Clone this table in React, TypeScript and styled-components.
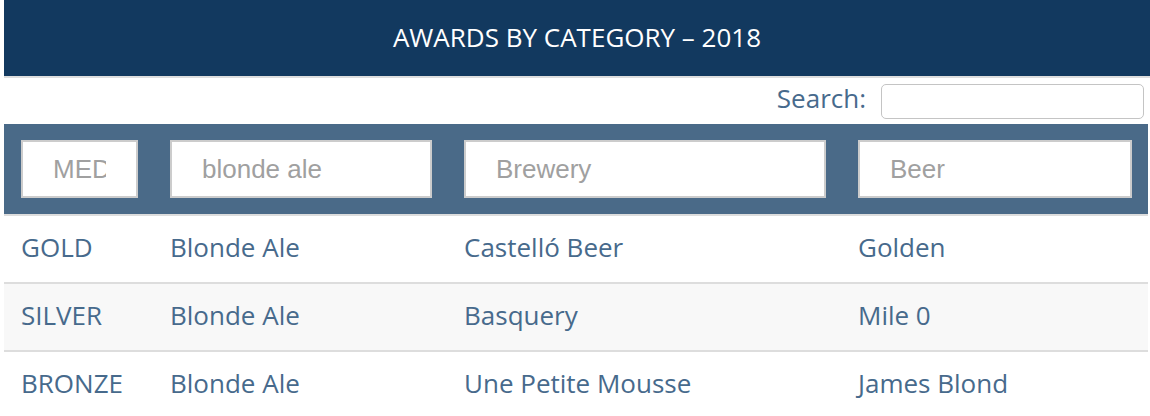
import styled, { createGlobalStyle } from 'styled-components';

const GlobalStyle = createGlobalStyle`
  body {
    margin: 0;
    background: #fff;
    font-family: 'Open Sans', sans-serif;
  }
  * {
    box-sizing: border-box;
  }
`;

const Page = styled.div`
  padding-left: 4px;
  width: 1150px;
`;

const Header = styled.h1`
  margin: 0;
  height: 78px;
  background: #12395f;
  border-bottom: 2px solid #dedede;
  color: #fff;
  font-size: 26px;
  font-weight: 400;
  display: flex;
  align-items: center;
  justify-content: center;
  padding-bottom: 2px;
`;

const SearchBar = styled.div`
  height: 46px;
  display: flex;
  align-items: center;
  justify-content: flex-end;
  gap: 15px;
  padding-right: 2px;
  color: #476a8c;
  font-size: 26px;
  margin-right: 4px;
`;

const SearchLabel = styled.label`
  margin-bottom: 6px;
`;

const SearchInput = styled.input`
  width: 263px;
  height: 35px;
  border: 1px solid #c4c4c4;
  border-radius: 5px;
  margin-top: 1px;
`;

const Table = styled.div`
  width: 1144px;
`;

const cols = '150px 294px 394px 306px';

const FilterRow = styled.div`
  display: grid;
  grid-template-columns: ${cols};
  background: #4a6a88;
  height: 92px;
  border-bottom: 2px solid #dddddd;
  align-items: center;
`;

const FilterCell = styled.div<{ first?: boolean }>`
  padding: 0 16px 0 ${(p) => (p.first ? '17px' : '16px')};
`;

const FilterInput = styled.input`
  width: 100%;
  height: 58px;
  border: 2px solid #cccccc;
  background: #fff;
  padding: 0 30px;
  font-family: 'Liberation Sans', Arial, sans-serif;
  font-size: 26px;
  color: #555;
  outline: none;

  &::placeholder {
    color: #a0a0a0;
  }
`;

const Row = styled.div<{ striped?: boolean }>`
  display: grid;
  grid-template-columns: ${cols};
  height: 68px;
  border-bottom: 2px solid #dddddd;
  background: ${(p) => (p.striped ? '#f8f8f8' : '#fff')};
  align-items: center;
`;

const Cell = styled.div<{ first?: boolean }>`
  padding: 0 16px 4px ${(p) => (p.first ? '17px' : '16px')};
  color: #476a8c;
  font-size: 26px;
  white-space: nowrap;
`;

const awards = [
  { medal: 'GOLD', category: 'Blonde Ale', brewery: 'Castelló Beer', beer: 'Golden' },
  { medal: 'SILVER', category: 'Blonde Ale', brewery: 'Basquery', beer: 'Mile 0' },
  { medal: 'BRONZE', category: 'Blonde Ale', brewery: 'Une Petite Mousse', beer: 'James Blond' },
];

export default function App() {
  return (
    <Page>
      <GlobalStyle />
      <Header>AWARDS BY CATEGORY – 2018</Header>
      <SearchBar>
        <SearchLabel htmlFor="search">Search:</SearchLabel>
        <SearchInput id="search" type="search" />
      </SearchBar>
      <Table>
        <FilterRow>
          <FilterCell first>
            <FilterInput placeholder="MEDAL" />
          </FilterCell>
          <FilterCell>
            <FilterInput placeholder="blonde ale" />
          </FilterCell>
          <FilterCell>
            <FilterInput placeholder="Brewery" />
          </FilterCell>
          <FilterCell>
            <FilterInput placeholder="Beer" />
          </FilterCell>
        </FilterRow>
        {awards.map((a, i) => (
          <Row key={a.medal} striped={i % 2 === 1}>
            <Cell first>{a.medal}</Cell>
            <Cell>{a.category}</Cell>
            <Cell>{a.brewery}</Cell>
            <Cell>{a.beer}</Cell>
          </Row>
        ))}
      </Table>
    </Page>
  );
}
